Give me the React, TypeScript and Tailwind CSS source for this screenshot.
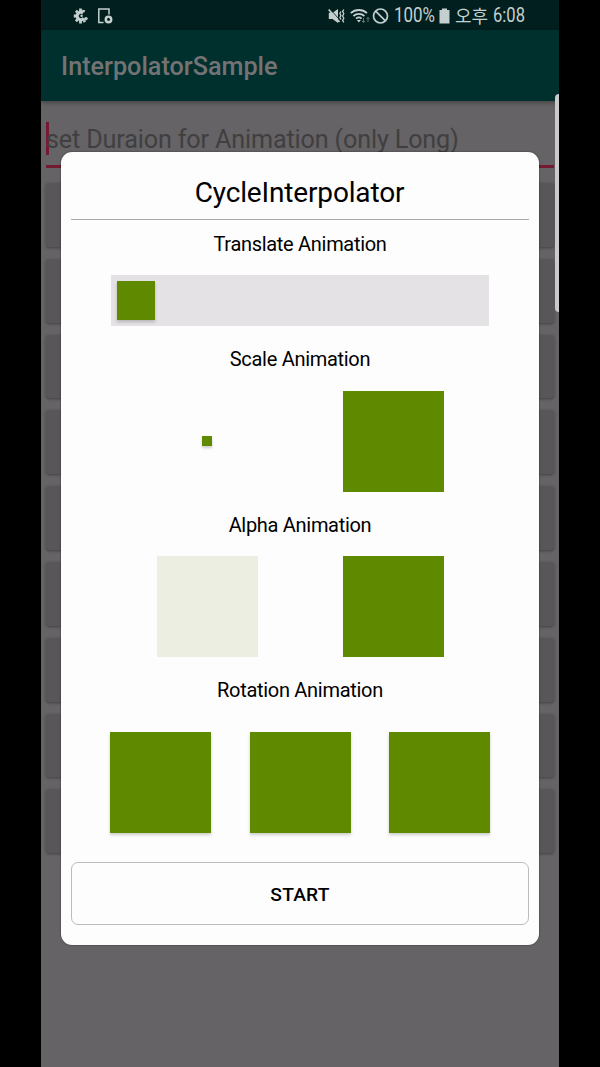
import React from 'react';

const GREEN = 'bg-[#5f8a00]';
const LIFT = 'shadow-[0_2px_3px_rgba(0,0,0,0.2)]';

function StatusBar() {
  return (
    <div className="flex h-[30px] shrink-0 items-center bg-[#001f1e] pt-px text-[#c4d0d0]">
      <svg className="ml-[32px]" width="16" height="16" viewBox="0 0 16 16" fill="none" stroke="currentColor">
        <path d="M10.200 4.900A3.800 3.800 0 1 0 11 10.200" strokeWidth="3.200" />
        <path d="M7.500 3V.5M4.600 4.300 2.900 2.700M3.300 8H.8M4.600 11.600 2.900 13.300M7.500 13v2.500M11 12.500l1 1.500M10.300 4l.5-2" strokeWidth="2.800" />
        <circle cx="8.600" cy="7.800" r="1.200" fill="currentColor" stroke="none" />
        <circle cx="13" cy="10.600" r="1.700" fill="currentColor" stroke="none" />
      </svg>
      <svg className="ml-[7px]" width="17" height="16" viewBox="0 0 17 16" fill="none" stroke="currentColor">
        <path d="M13 6.500V1H2.800v13.500H7.500" strokeWidth="1.500" />
        <circle cx="12.500" cy="11.500" r="2.700" strokeWidth="2.500" />
        <path d="M12.500 9.800v1.900h1.500" stroke="#001f1e" strokeWidth=".8" />
      </svg>
      <div className="ml-[215px] flex items-center">
        <svg width="17" height="16" viewBox="0 0 17 16" fill="none" stroke="currentColor">
          <path d="M.8 4.700h3.700L10 1v14L4.500 11H.8z" fill="currentColor" stroke="none" />
          <path d="M2 1 12 12.200" stroke="#001f1e" strokeWidth=".9" />
          <path d="M.7 1.500 11.500 14" strokeWidth="1.700" />
          <path d="m12.900 3.500-1 2 1 2-1 2 1 2M15.800 1.500l-1.200 2.100 1.200 2.200L14.600 8l1.200 2.200-1.200 2.200 1.200 2" strokeWidth="1.300" />
        </svg>
        <svg className="ml-[5px]" width="20" height="16" viewBox="0 0 20 16" fill="none" stroke="currentColor">
          <path d="M.8 5.200c4.500-4.300 11.700-4.300 16.200 0M3.400 8c3.200-2.900 7.800-2.900 11 0M6 10.600c1.900-1.500 3.900-1.500 5.600 0" strokeWidth="1.800" />
          <path d="m6.900 12 2 2.500 2-2.500z" fill="currentColor" stroke="none" />
          <path d="M13.500 10v4.500M12 13l1.500 1.500L15 13M18 14v-4.500M16.500 11 18 9.500l1.500 1.500" stroke="#617675" strokeWidth="1" />
        </svg>
        <svg className="ml-[2px]" width="17" height="16" viewBox="0 0 17 16" fill="none" stroke="currentColor" strokeWidth="1.700">
          <circle cx="8.500" cy="8" r="7" />
          <path d="m3.600 3.200 9.800 9.600" />
        </svg>
      </div>
      <span className="ml-[5px] w-[41px] pt-px whitespace-nowrap"><span className="inline-block origin-left scale-x-[0.87] font-['Roboto',sans-serif] text-[19.500px] leading-[28px]">100%</span></span>
      <svg className="ml-[4px]" width="11" height="16" viewBox="0 0 11 16" fill="currentColor">
        <path d="M3 .5h5V2h2.500v13.500H.5V2H3z" />
      </svg>
      <span className="ml-[5px] w-[34px] pb-[2px] whitespace-nowrap font-['Noto_Sans_CJK_KR',sans-serif] text-[18px] leading-[28px]">오후</span>
      <span className="ml-[4px] pt-px whitespace-nowrap"><span className="inline-block origin-left scale-x-[0.85] font-['Roboto',sans-serif] text-[19.500px] leading-[28px]">6:08</span></span>
    </div>
  );
}

function SectionLabel({ children }: { children: React.ReactNode }) {
  return <h2 className="h-[24px] text-center text-[20px] leading-[24px] tracking-[-0.300px] text-black">{children}</h2>;
}

function Dialog() {
  return (
    <section className="absolute top-[152px] left-[20px] flex h-[793px] w-[478px] flex-col rounded-[11px] bg-[#fefdfe] px-[10px] shadow-[0_0_2px_rgba(0,0,0,0.5)]">
      <h1 className="h-[68px] border-b border-[#aaa9aa] pt-[24px] pr-px text-center text-[28px] leading-[34px] tracking-[-0.150px] text-black">CycleInterpolator</h1>
      <div className="mt-[12px]"><SectionLabel>Translate Animation</SectionLabel></div>
      <div className="mx-[40px] mt-[19px] flex h-[51px] bg-[#e4e2e4] p-[6px]">
        <div className={`${GREEN} ${LIFT} h-[39px] w-[38px]`} />
      </div>
      <div className="mt-[21px]"><SectionLabel>Scale Animation</SectionLabel></div>
      <div className="mt-[20px] flex h-[101px] items-center pl-[85px]">
        <div className="flex w-[101px] justify-center"><div className={`${GREEN} ${LIFT} mb-px h-[10px] w-[10px]`} /></div>
        <div className={`${GREEN} ml-[85.500px] h-[101px] w-[101px]`} />
      </div>
      <div className="mt-[21px]"><SectionLabel>Alpha Animation</SectionLabel></div>
      <div className="mt-[19px] flex pl-[85.500px]">
        <div className="h-[101px] w-[101px] bg-[#ebeee1]" />
        <div className={`${GREEN} ml-[85px] h-[101px] w-[101px]`} />
      </div>
      <div className="mt-[21px]"><SectionLabel>Rotation Animation</SectionLabel></div>
      <div className="mt-[30px] flex gap-[38.500px] pl-[39px]">
        <div className={`${GREEN} ${LIFT} h-[101px] w-[101px]`} />
        <div className={`${GREEN} ${LIFT} h-[101px] w-[101px]`} />
        <div className={`${GREEN} ${LIFT} h-[101px] w-[101px]`} />
      </div>
      <button className="mt-[29px] h-[63px] rounded-[7px] border border-[#bdbcbd] pt-[3px] text-[19.200px] font-medium tracking-[0.200px] text-black">START</button>
    </section>
  );
}

export default function App() {
  return (
    <div className="flex h-[1067px] w-[600px] justify-center overflow-hidden bg-black font-['Roboto',sans-serif]">
      <main className="relative flex w-[518px] flex-col overflow-hidden bg-[#656365]">
        <StatusBar />
        <header className="flex h-[71px] shrink-0 items-center bg-[#00302e] pl-[20px] text-[25.200px] font-medium text-[#747374] shadow-[0_2px_4px_rgba(0,0,0,0.3)]">
          <span className="pt-[3px]">InterpolatorSample</span>
        </header>
        <div className="mx-[5px] mt-[21px] h-[46px] border-b-[3px] border-[#741a30]">
          <div className="flex h-[33px] items-center border-l-[3px] border-[#741a30] text-[25.200px] tracking-[-0.160px] whitespace-nowrap text-[#403f40]"><span className="-ml-[3px] pt-[2px]">set Duraion for Animation (only Long)</span></div>
        </div>
        <div className="mt-[15px] flex flex-col gap-[12px] px-[5px]">
          {Array.from({ length: 9 }, (_, i) => (
            <div key={i} className="h-[63.800px] rounded-[3px] bg-[#585658] shadow-[0_1px_3px_rgba(0,0,0,0.35)]" />
          ))}
        </div>
        <Dialog />
        <div className="absolute top-[94px] right-0 h-[218px] w-[4px] rounded-l-[4px] bg-[#cbcacb]" />
      </main>
    </div>
  );
}
